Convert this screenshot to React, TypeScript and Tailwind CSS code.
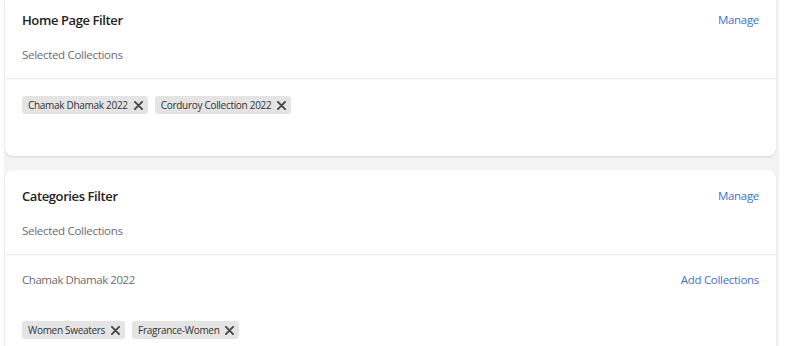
const font = { fontFamily: '"Open Sans", "Noto Sans", sans-serif' };

const Chip = ({ label }: { label: string }) => (
  <span className="inline-flex h-[18px] items-center gap-[6px] rounded-[3px] bg-[#e4e4e4] pl-[6px] pr-[5px] text-[10px] tracking-[-0.3px] text-[#333]">
    {label}
    <svg width="9" height="9" viewBox="0 0 10 10" className="text-[#444]">
      <path d="M1 1L9 9M9 1L1 9" stroke="currentColor" strokeWidth="2" strokeLinecap="round" />
    </svg>
  </span>
);

const FilterCard = ({
  title,
  children,
  className = '',
}: {
  title: string;
  children: React.ReactNode;
  className?: string;
}) => (
  <div className={`rounded-lg bg-white shadow-[0_1px_2px_rgba(0,0,0,0.12)] ${className}`}>
    <div className="px-[17px] pt-[17px] pb-[13px]">
      <div className="flex items-center justify-between">
        <h3 className="text-[13px] font-semibold leading-[18px] tracking-[-0.4px] text-[#222]">{title}</h3>
        <a className="text-[11.5px] leading-[18px] tracking-[-0.3px] text-[#3d72c9]">Manage</a>
      </div>
      <p className="mt-[16px] text-[11.5px] leading-[20px] tracking-[-0.3px] text-[#6d6d6d]">Selected Collections</p>
    </div>
    <div className="border-t border-[#ececec]">{children}</div>
  </div>
);

export default function App() {
  return (
    <div className="h-[346px] overflow-hidden bg-white" style={font}>
      <div className="ml-[4px] w-[775px] bg-[#f3f3f3] pr-[3px] pl-[1px]">
        <FilterCard title="Home Page Filter" className="-mt-[6px]">
          <div className="flex gap-[7px] px-[17px] pt-[17px] pb-[42px]">
            <Chip label="Chamak Dhamak 2022" />
            <Chip label="Corduroy Collection 2022" />
          </div>
        </FilterCard>
        <FilterCard title="Categories Filter" className="mt-[14px]">
          <div className="px-[17px] pt-[15px]">
            <div className="flex items-center justify-between">
              <span className="text-[11.5px] leading-[20px] tracking-[-0.45px] text-[#6d6d6d]">Chamak Dhamak 2022</span>
              <a className="text-[11.5px] leading-[20px] tracking-[-0.3px] text-[#3d72c9]">Add Collections</a>
            </div>
            <div className="flex gap-[7px] pt-[31px] pb-[30px]">
              <Chip label="Women Sweaters" />
              <Chip label="Fragrance-Women" />
            </div>
          </div>
        </FilterCard>
      </div>
    </div>
  );
}
